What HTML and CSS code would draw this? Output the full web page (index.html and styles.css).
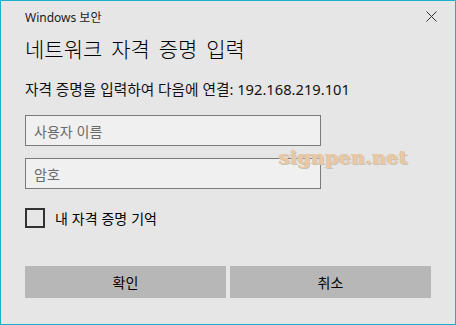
FILE: index.html
```html
<!DOCTYPE html>
<html lang="ko">
<head>
<meta charset="utf-8">
<title>Windows 보안</title>
<link rel="stylesheet" href="styles.css">
</head>
<body>

<div class="dialog">
    <div class="titlebar">
        <span class="app-name">Windows 보안</span>
        <span class="close">
            <svg width="11" height="11" viewBox="0 0 11 11"><path d="M0.5 0.5 L10.5 10.5 M10.5 0.5 L0.5 10.5" stroke="#333" stroke-width="1" fill="none"/></svg>
        </span>
    </div>
    <h1 class="heading">네트워크 자격 증명 입력</h1>
    <p class="message">자격 증명을 입력하여 다음에 연결: 192.168.219.101</p>

    <div class="fields">
        <input type="text" class="field" placeholder="사용자 이름">
        <input type="password" class="field" placeholder="암호">
    </div>

    <label class="remember">
        <span class="box"></span>
        <span>내 자격 증명 기억</span>
    </label>

    <div class="buttons">
        <button class="btn">확인</button>
        <button class="btn">취소</button>
    </div>

    <div class="watermark">signpen.net</div>
</div>

</body>
</html>
```

FILE: styles.css
```css
* {
    box-sizing: border-box;
}

body {
    margin: 0;
    font-family: "Noto Sans", "Noto Sans CJK KR", sans-serif;
    color: #000;
}

.dialog {
    position: relative;
    width: 456px;
    height: 325px;
    background: #e6e6e6;
    border: 1px solid #1ab0c8;
    padding: 0 24px 0 24px;
}

.titlebar {
    display: flex;
    justify-content: space-between;
    align-items: center;
    height: 30px;
    padding-top: 1px;
}

.app-name {
    font-size: 12px;
    color: #1a1a1a;
}

.close {
    display: flex;
    margin-right: -6px;
}

.heading {
    margin: 2px 0 0 0;
    font-size: 21px;
    font-weight: 300;
    line-height: 30px;
    word-spacing: 3px;
    font-family: "Noto Sans CJK KR", sans-serif;
}

.message {
    margin: 16px 0 0 0;
    font-size: 14.7px;
    line-height: 20px;
    color: #111;
}

.fields {
    display: flex;
    flex-direction: column;
    gap: 12px;
    margin-top: 16px;
}

.field {
    width: 296px;
    height: 31px;
    border: 1px solid #7a7a7a;
    background: #f0f0f0;
    padding: 0 8px;
    font-family: "Noto Sans CJK KR", sans-serif;
    font-size: 14px;
    outline: none;
}

.field::placeholder {
    color: #6a6a6a;
}

.remember {
    display: flex;
    align-items: center;
    gap: 10px;
    margin-top: 19px;
    font-size: 14px;
    font-family: "Noto Sans CJK KR", sans-serif;
}

.box {
    width: 20px;
    height: 20px;
    border: 2px solid #333;
}

.buttons {
    display: flex;
    gap: 4px;
    margin-top: 38px;
}

.btn {
    flex: 1;
    height: 32px;
    border: none;
    background: #b7b7b7;
    font-family: "Noto Sans CJK KR", sans-serif;
    font-size: 14px;
    color: #000;
}

.watermark {
    position: absolute;
    left: 278px;
    top: 145px;
    font-family: "DejaVu Serif", serif;
    font-weight: bold;
    font-size: 19px;
    letter-spacing: 0.3px;
    color: #ebc8a0;
    text-shadow: 1px 1px 0 #c9c0b6, -1px 0 0 #d4cbc0;
}
```
